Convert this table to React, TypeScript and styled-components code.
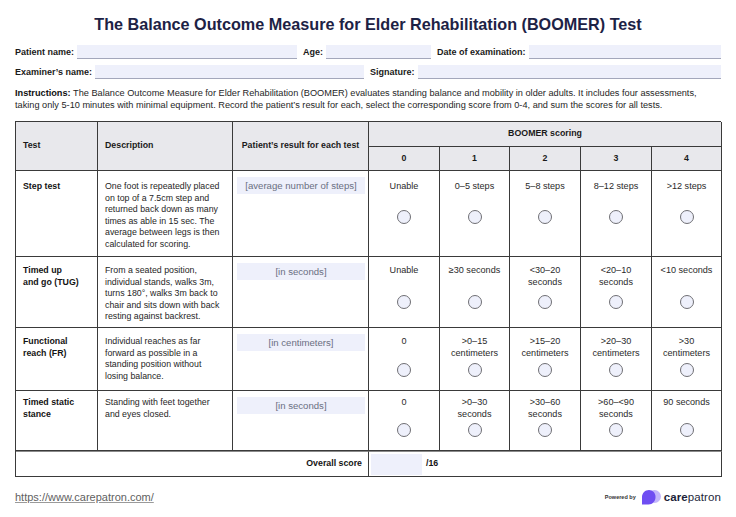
import React from "react";
import styled, { createGlobalStyle } from "styled-components";

const Global = createGlobalStyle`
  html, body { margin: 0; padding: 0; background: #ffffff; }
  body { font-family: "Liberation Sans", Arial, Helvetica, sans-serif; color: #1c1c1c; }
  * { box-sizing: border-box; }
`;

const Page = styled.div`
  width: 736px;
  height: 517px;
  padding: 14px 15px 0;
  overflow: hidden;
`;

const Title = styled.h1`
  margin: 0;
  font-size: 16.2px;
  line-height: 20px;
  font-weight: 700;
  text-align: center;
  color: #1d2245;
`;

const Fields = styled.div`
  margin-top: 10px;
  display: flex;
  flex-direction: column;
  gap: 4px;
`;

const FieldRow = styled.div`
  display: flex;
  align-items: center;
  height: 16px;
`;

const Label = styled.span`
  font-size: 9px;
  font-weight: 700;
  white-space: nowrap;
  margin-right: 3px;
  color: #1a1a1a;
`;

const Field = styled.span<{ $w?: number }>`
  display: block;
  height: 14px;
  background: #eef0fb;
  border-bottom: 1px solid #a3a7bb;
  margin-right: 6px;
  ${(p) => (p.$w ? `width: ${p.$w}px; flex: none;` : `flex: 1; margin-right: 0;`)}
`;

const Instructions = styled.p`
  margin: 7px 0 0;
  font-size: 9.2px;
  line-height: 12px;
  color: #262626;
  white-space: nowrap;
  b { font-weight: 700; color: #111; }
`;

const Table = styled.div`
  margin-top: 10px;
  display: grid;
  grid-template-columns: 82px 135px 136px 71px 70px 71px 71px 70px;
  grid-template-rows: 25px 24px 86px 71px 63px 60px 26px;
  border-top: 1px solid #3a3a3a;
  border-left: 1px solid #3a3a3a;
  width: 706px;
`;

const Cell = styled.div<{ $head?: boolean; $span?: number; $rows?: number; $thickTop?: boolean; $pad?: number }>`
  border-right: 1px solid #3a3a3a;
  border-bottom: 1px solid #3a3a3a;
  background: ${(p) => (p.$head ? "#e8e8ec" : "#ffffff")};
  font-size: 8.8px;
  line-height: 11.5px;
  ${(p) => (p.$span ? `grid-column: span ${p.$span};` : "")}
  ${(p) => (p.$rows ? `grid-row: span ${p.$rows};` : "")}
  ${(p) => (p.$thickTop ? `border-top: 1px solid #8a8a8a;` : "")}
`;

const HeadCell = styled(Cell).attrs({ $head: true })<{ $align?: string }>`
  display: flex;
  align-items: center;
  justify-content: ${(p) => p.$align || "flex-start"};
  padding: 0 7px;
  font-weight: 700;
  color: #1a1a1a;
  text-align: center;
`;

const TestName = styled(Cell)`
  padding: ${(p) => p.$pad ?? 9}px 7px;
  font-weight: 700;
  color: #141414;
`;

const Desc = styled(Cell)`
  padding: ${(p) => p.$pad ?? 9}px 7px;
  color: #262626;
`;

const ResultCell = styled(Cell)`
  padding: 6px 3px 0 4px;
`;

const ResultField = styled.div`
  height: 17px;
  background: #eef0fb;
  color: #6a6f82;
  text-align: center;
  line-height: 17px;
  font-size: 9.6px;
`;

const ScoreCell = styled(Cell)`
  padding: ${(p) => p.$pad ?? 9}px 3px 0;
  display: flex;
  flex-direction: column;
  align-items: center;
  text-align: center;
  color: #2a2a2a;
  font-size: 9.1px;
`;

const ScoreText = styled.div`
  min-height: 23px;
`;

const Radio = styled.span<{ $gap: number }>`
  display: block;
  width: 14px;
  height: 14px;
  margin-top: ${(p) => p.$gap}px;
  border-radius: 50%;
  border: 1.5px solid #6f6f74;
  background: #eef0fb;
`;

const OverallLabel = styled(Cell)`
  display: flex;
  align-items: center;
  justify-content: flex-end;
  padding-right: 6px;
  font-weight: 700;
  color: #141414;
`;

const OverallValue = styled(Cell)`
  display: flex;
  align-items: center;
  gap: 4px;
  padding: 2px;
  font-weight: 700;
  color: #141414;
`;

const ScoreBox = styled.span`
  width: 51px;
  height: 21px;
  background: #eef0fb;
`;

const Footer = styled.div`
  margin-top: 12px;
  display: flex;
  align-items: center;
  justify-content: space-between;
  width: 706px;
`;

const Url = styled.a`
  font-size: 11px;
  color: #5f5f5f;
  text-decoration: underline;
  text-decoration-color: #9a9a9a;
`;

const Brand = styled.div`
  display: flex;
  align-items: center;
  gap: 3px;
`;

const Powered = styled.span`
  font-size: 5.5px;
  color: #333;
  font-weight: 700;
  margin-right: 2px;
`;

const BrandName = styled.span`
  font-size: 11.5px;
  color: #1d1f3a;
  letter-spacing: 0.1px;
  b { font-weight: 700; }
`;

type Row = { name: React.ReactNode; desc: string; result: string; pad: number; gap: number; scores: React.ReactNode[] };

const rows: Row[] = [
  {
    name: "Step test",
    desc: "One foot is repeatedly placed on top of a 7.5cm step and returned back down as many times as able in 15 sec. The average between legs is then calculated for scoring.",
    result: "[average number of steps]",
    pad: 10,
    gap: 6,
    scores: ["Unable", "0–5 steps", "5–8 steps", "8–12 steps", ">12 steps"],
  },
  {
    name: (
      <>
        Timed up
        <br />
        and go (TUG)
      </>
    ),
    desc: "From a seated position, individual stands, walks 3m, turns 180°, walks 3m back to chair and sits down with back resting against backrest.",
    result: "[in seconds]",
    pad: 8,
    gap: 7,
    scores: [
      "Unable",
      "≥30 seconds",
      <>
        &lt;30–20
        <br />
        seconds
      </>,
      <>
        &lt;20–10
        <br />
        seconds
      </>,
      "<10 seconds",
    ],
  },
  {
    name: (
      <>
        Functional
        <br />
        reach (FR)
      </>
    ),
    desc: "Individual reaches as far forward as possible in a standing position without losing balance.",
    result: "[in centimeters]",
    pad: 8,
    gap: 4,
    scores: [
      "0",
      <>
        &gt;0–15
        <br />
        centimeters
      </>,
      <>
        &gt;15–20
        <br />
        centimeters
      </>,
      <>
        &gt;20–30
        <br />
        centimeters
      </>,
      <>
        &gt;30
        <br />
        centimeters
      </>,
    ],
  },
  {
    name: (
      <>
        Timed static
        <br />
        stance
      </>
    ),
    desc: "Standing with feet together and eyes closed.",
    result: "[in seconds]",
    pad: 6,
    gap: 3,
    scores: [
      "0",
      <>
        &gt;0–30
        <br />
        seconds
      </>,
      <>
        &gt;30–60
        <br />
        seconds
      </>,
      <>
        &gt;60–&lt;90
        <br />
        seconds
      </>,
      "90 seconds",
    ],
  },
];

const Logo = () => (
  <svg width="20" height="16" viewBox="0 0 20 16">
    <circle cx="13.5" cy="7.5" r="6.5" fill="#c3b6fb" />
    <path d="M1 15.5 V8 C1 3.8 4.2 1 8 1 C11.8 1 14.5 4 14.5 8 C14.5 12.2 11.5 15.5 7.5 15.5 Z" fill="#6f4ef2" />
  </svg>
);

export default function App() {
  return (
    <Page>
      <Global />
      <Title>The Balance Outcome Measure for Elder Rehabilitation (BOOMER) Test</Title>
      <Fields>
        <FieldRow>
          <Label>Patient name:</Label>
          <Field $w={220} />
          <Label>Age:</Label>
          <Field $w={105} />
          <Label>Date of examination:</Label>
          <Field />
        </FieldRow>
        <FieldRow>
          <Label>Examiner’s name:</Label>
          <Field $w={269} />
          <Label>Signature:</Label>
          <Field />
        </FieldRow>
      </Fields>
      <Instructions>
        <b>Instructions:</b> The Balance Outcome Measure for Elder Rehabilitation (BOOMER) evaluates standing balance and mobility in older adults. It includes four assessments,
        <br />
        taking only 5-10 minutes with minimal equipment. Record the patient’s result for each, select the corresponding score from 0-4, and sum the scores for all tests.
      </Instructions>
      <Table>
        <HeadCell $rows={2}>Test</HeadCell>
        <HeadCell $rows={2}>Description</HeadCell>
        <HeadCell $rows={2} $align="center">
          Patient’s result for each test
        </HeadCell>
        <HeadCell $span={5} $align="center">
          BOOMER scoring
        </HeadCell>
        {[0, 1, 2, 3, 4].map((n) => (
          <HeadCell key={n} $align="center">
            {n}
          </HeadCell>
        ))}
        {rows.map((r, i) => (
          <React.Fragment key={i}>
            <TestName $pad={r.pad}>{r.name}</TestName>
            <Desc $pad={r.pad}>{r.desc}</Desc>
            <ResultCell>
              <ResultField>{r.result}</ResultField>
            </ResultCell>
            {r.scores.map((s, j) => (
              <ScoreCell key={j} $pad={r.pad}>
                <ScoreText>{s}</ScoreText>
                <Radio $gap={r.gap} />
              </ScoreCell>
            ))}
          </React.Fragment>
        ))}
        <OverallLabel $span={3} $thickTop>
          Overall score
        </OverallLabel>
        <OverallValue $span={5} $thickTop>
          <ScoreBox />
          /16
        </OverallValue>
      </Table>
      <Footer>
        <Url href="#">https://www.carepatron.com/</Url>
        <Brand>
          <Powered>Powered by</Powered>
          <Logo />
          <BrandName>
            <b>care</b>patron
          </BrandName>
        </Brand>
      </Footer>
    </Page>
  );
}
